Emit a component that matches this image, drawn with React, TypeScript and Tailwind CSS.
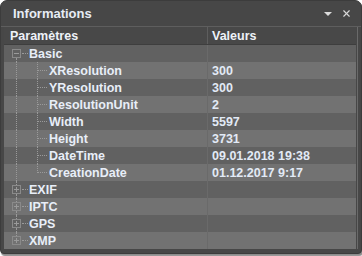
import { X } from 'lucide-react';

type Row = {
    label: string;
    value?: string;
    level: 0 | 1;
    expanded?: boolean;
    lastChild?: boolean;
    lastRoot?: boolean;
};

const rows: Row[] = [
    { label: 'Basic', level: 0, expanded: true },
    { label: 'XResolution', value: '300', level: 1 },
    { label: 'YResolution', value: '300', level: 1 },
    { label: 'ResolutionUnit', value: '2', level: 1 },
    { label: 'Width', value: '5597', level: 1 },
    { label: 'Height', value: '3731', level: 1 },
    { label: 'DateTime', value: '09.01.2018 19:38', level: 1 },
    { label: 'CreationDate', value: '01.12.2017 9:17', level: 1, lastChild: true },
    { label: 'EXIF', level: 0 },
    { label: 'IPTC', level: 0 },
    { label: 'GPS', level: 0 },
    { label: 'XMP', level: 0, lastRoot: true },
];

function ExpandBox({ open }: { open: boolean }) {
    return (
        <span className="absolute left-[8px] top-[4px] w-[9px] h-[9px] border border-[#8a8a8a] flex items-center justify-center">
            <span className="absolute w-[5px] h-px bg-[#9a9a9a]" />
            {!open && <span className="absolute w-px h-[5px] bg-[#9a9a9a]" />}
        </span>
    );
}

function TreeCell({ row, index }: { row: Row; index: number }) {
    const dot = 'border-[#9a9a9a] border-dotted';
    return (
        <div className="relative w-[204px] h-full border-r border-[#6a6a6a] shrink-0">
            {/* root level vertical connector */}
            {row.level === 1 && <span className={`absolute left-[12px] top-0 h-full border-l ${dot}`} />}
            {row.level === 0 && index > 0 && (
                <span className={`absolute left-[12px] top-0 h-[4px] border-l ${dot}`} />
            )}
            {row.level === 0 && !row.lastRoot && (
                <span className={`absolute left-[12px] top-[13px] h-[4px] border-l ${dot}`} />
            )}

            {row.level === 0 ? (
                <>
                    <ExpandBox open={!!row.expanded} />
                    <span className={`absolute left-[18px] top-[8px] w-[6px] border-t ${dot}`} />
                    <span className="absolute left-[25px] top-[1px] leading-[17px]">{row.label}</span>
                </>
            ) : (
                <>
                    <span
                        className={`absolute left-[33px] top-0 border-l ${dot} ${row.lastChild ? 'h-[9px]' : 'h-full'}`}
                    />
                    <span className={`absolute left-[34px] top-[8px] w-[9px] border-t ${dot}`} />
                    <span className="absolute left-[45px] top-[1px] leading-[17px]">{row.label}</span>
                </>
            )}
        </div>
    );
}

export default function App() {
    return (
        <div className="w-[362px] h-[256px] bg-white" style={{ fontFamily: '"Liberation Sans", Arial, sans-serif' }}>
            <div className="w-[362px] h-[254px] bg-[#474747] rounded-t-[7px] rounded-b-[4px] border border-[#3c3c3c] shadow-[1px_2px_1px_rgba(0,0,0,0.45)] flex flex-col overflow-hidden">
                {/* Title bar */}
                <div className="h-[25px] flex items-center justify-between pl-[12px] pr-[9px] shrink-0">
                    <span className="text-[13px] font-bold text-[#e6ecf4]">Informations</span>
                    <div className="flex items-center gap-[8px] text-[#d8d8d8]">
                        <svg width="10" height="6" viewBox="0 0 10 6">
                            <path d="M1 1 L9 1 L5 5 Z" fill="#dcdcdc" />
                        </svg>
                        <X size={11} strokeWidth={2.5} />
                    </div>
                </div>

                {/* Grid */}
                <div className="flex-1 flex flex-col border-t border-[#5e5e5e] pl-[3px] pr-[3px] pb-[4px]">
                    <div className="flex flex-1 border-r border-[#6a6a6a]">
                        <div className="w-[352px] flex flex-col text-[12.5px] font-bold text-[#e8eef8]">
                            {/* Header */}
                            <div className="flex h-[17px] shrink-0 bg-[#484848]">
                                <div className="w-[204px] border-r border-[#5e5e5e] pl-[6px] pt-[1px] leading-[17px] text-[#eef2f8]">
                                    Paramètres
                                </div>
                                <div className="pl-[4px] pt-[1px] leading-[17px] text-[#eef2f8]">Valeurs</div>
                            </div>
                            <div className="h-[1px] bg-[#3e3e3e]" />

                            {rows.map((row, i) => (
                                <div
                                    key={row.label}
                                    className={`flex h-[17px] shrink-0 ${i % 2 === 0 ? 'bg-[#616161]' : 'bg-[#727272]'}`}
                                >
                                    <TreeCell row={row} index={i} />
                                    <div className="pl-[4px] pt-[1px] leading-[17px] text-[#e2eaf6]">{row.value ?? ''}</div>
                                </div>
                            ))}
                            <div className="flex-1 bg-[#474747]" />
                        </div>
                    </div>
                </div>
            </div>
        </div>
    );
}
